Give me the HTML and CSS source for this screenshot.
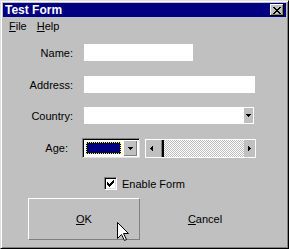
FILE: index.html
```html
<!DOCTYPE html>
<html lang="en">
<head>
	<meta charset="UTF-8">
	<title>Test Form</title>
	<link rel="stylesheet" href="styles.css">
</head>
<body>
	<div class="window">
		<div class="titlebar">
			<span class="title">Test Form</span>
			<button class="close" type="button" aria-label="Close">
				<svg width="8" height="7" viewBox="0 0 8 7" shape-rendering="crispEdges"><path d="M0 0h2v1h1v1h2v-1h1v-1h2v1h-1v1h-1v1h-1v1h1v1h1v1h1v1h-2v-1h-1v-1h-2v1h-1v1h-2v-1h1v-1h1v-1h1v-1h-1v-1h-1v-1h-1z" fill="#000"/></svg>
			</button>
		</div>

		<div class="menubar">
			<span class="menu-item"><u>F</u>ile</span>
			<span class="menu-item"><u>H</u>elp</span>
		</div>

		<div class="form">
			<div class="field">
				<label>Name:</label>
				<div class="edit edit-name"></div>
			</div>
			<div class="field field-address">
				<label>Address:</label>
				<div class="edit edit-address"></div>
			</div>
			<div class="field">
				<label>Country:</label>
				<div class="edit edit-country">
					<span class="drop-flat">
						<svg width="5" height="3" viewBox="0 0 5 3" shape-rendering="crispEdges"><path d="M0 0h5v1h-1v1h-1v1h-1v-1h-1v-1h-1z" fill="#000"/></svg>
					</span>
				</div>
			</div>
			<div class="field field-age">
				<label>Age:</label>
				<div class="age-controls">
					<div class="combo">
						<span class="combo-value"></span>
						<span class="drop">
							<svg width="5" height="3" viewBox="0 0 5 3" shape-rendering="crispEdges"><path d="M0 0h5v1h-1v1h-1v1h-1v-1h-1v-1h-1z" fill="#000"/></svg>
						</span>
					</div>
					<div class="scrollbar">
						<span class="scroll-btn">
							<svg width="3" height="5" viewBox="0 0 3 5" shape-rendering="crispEdges"><path d="M2 0h1v5h-1v-1h-1v-1h-1v-1h1v-1h1z" fill="#000"/></svg>
						</span>
						<span class="scroll-thumb"></span>
						<span class="scroll-track"></span>
						<span class="scroll-btn">
							<svg width="3" height="5" viewBox="0 0 3 5" shape-rendering="crispEdges"><path d="M0 0h1v1h1v1h1v1h-1v1h-1v1h-1z" fill="#000"/></svg>
						</span>
					</div>
				</div>
			</div>
		</div>

		<div class="check-row">
			<span class="checkbox">
				<svg width="7" height="7" viewBox="0 0 7 7" shape-rendering="crispEdges"><path d="M6 0h1v3h-1v1h-1v1h-1v1h-1v1h-1v-1h-1v-1h-1v-3h1v1h1v1h1v-1h1v-1h1v-1h1z" fill="#000"/></svg>
			</span>
			<span>Enable Form</span>
		</div>

		<div class="actions">
			<button class="btn" type="button"><u>O</u>K</button>
			<button class="btn btn-flat" type="button"><u>C</u>ancel</button>
		</div>

		<svg class="cursor" width="12" height="19" viewBox="0 0 12 19"><path d="M0.5 0.5V16.5L4.5 12.5L7.5 18.5L9.5 17.5L6.5 11.5H11.5Z" fill="#fff" stroke="#000"/></svg>
	</div>
</body>
</html>
```

FILE: styles.css
```css
* {
	box-sizing: border-box;
}

body {
	margin: 0;
	font-family: "Liberation Sans", Arial, sans-serif;
	font-size: 11px;
	color: #000;
}

button {
	font: inherit;
	color: inherit;
	padding: 0;
	margin: 0;
}

u {
	text-underline-offset: 1px;
}

.window {
	position: relative;
	width: 289px;
	height: 249px;
	display: flex;
	flex-direction: column;
	padding: 2px;
	background: #c0c0c0;
	border: 1px solid;
	border-color: #dfdfdf #000 #000 #dfdfdf;
	box-shadow: inset 1px 1px #fff, inset -1px -1px #808080;
}

/* title bar */
.titlebar {
	height: 14px;
	display: flex;
	align-items: center;
	justify-content: space-between;
	padding: 0 2px;
	background: #000080;
	color: #fff;
	font-size: 12px;
	font-weight: bold;
	line-height: 14px;
}

.close {
	width: 14px;
	height: 12px;
	display: grid;
	place-items: center;
	border: 0;
	background: #c0c0c0;
	box-shadow: inset -1px -1px #000, inset 1px 1px #fff, inset -2px -2px #808080;
}

.close svg {
	display: block;
}

/* menu */
.menubar {
	display: flex;
	height: 18px;
	line-height: 18px;
	padding-left: 1px;
}

.menu-item {
	padding: 0 5px;
}

/* form rows */
.form {
	display: flex;
	flex-direction: column;
	padding: 9px 0 0 3px;
}

.field {
	display: grid;
	grid-template-columns: 67px auto;
	column-gap: 11px;
	align-items: center;
	justify-items: start;
	height: 17px;
	margin-top: 14px;
}

.field:first-child {
	margin-top: 0;
}

.field-address {
	margin-top: 15px;
}

.field label {
	justify-self: end;
}

.edit {
	height: 17px;
	background: #fff;
}

.edit-name {
	width: 109px;
}

.edit-address {
	width: 171px;
}

.edit-country {
	width: 170px;
	display: flex;
	justify-content: flex-end;
	padding: 1px 1px 1px 0;
}

.drop-flat {
	width: 9px;
	display: grid;
	place-items: center;
	background: #c0c0c0;
}

.drop-flat svg {
	display: block;
}

/* age row */
.field-age {
	height: 20px;
}

.field-age label {
	padding-right: 5px;
}

.age-controls {
	display: flex;
	align-items: flex-start;
	gap: 5px;
	margin-left: -2px;
}

.combo {
	width: 58px;
	height: 20px;
	display: flex;
	padding: 2px;
	background: #fff;
	border: 1px solid;
	border-color: #808080 #dfdfdf #dfdfdf #808080;
	box-shadow: inset 1px 1px #000;
}

.combo-value {
	width: 36px;
	height: 12px;
	margin: 1px 2px 0 1px;
	border: 1px dotted #ff0;
	background: linear-gradient(#000080, #000080) padding-box, #000;
}

.drop {
	width: 14px;
	display: grid;
	place-items: center;
	margin: -1px 0 -1px 0;
	background: #c0c0c0;
	box-shadow: inset 1px 1px #fff, inset -1px -1px #808080;
}

.drop svg {
	display: block;
}

.scrollbar {
	width: 111px;
	height: 19px;
	margin-top: 1px;
	display: flex;
	border: 1px solid #fff;
}

.scroll-btn {
	width: 11px;
	display: grid;
	place-items: center;
	background: #c0c0c0;
}

.scroll-btn svg {
	display: block;
}

.scroll-thumb {
	width: 7px;
	background: #c0c0c0;
	box-shadow: inset -2px 0 #000, inset -3px 0 #808080;
}

.scroll-track {
	flex: 1;
	background-image: repeating-conic-gradient(#fff 0 25%, #c0c0c0 0 50%);
	background-size: 2px 2px;
}

/* checkbox */
.check-row {
	display: flex;
	align-items: center;
	justify-content: center;
	gap: 5px;
	height: 13px;
	margin-top: 19px;
}

.checkbox {
	width: 13px;
	height: 13px;
	display: grid;
	place-items: center;
	background: #fff;
	border: 1px solid;
	border-color: #808080 #fff #fff #808080;
	box-shadow: inset 1px 1px #000, inset -1px -1px #dfdfdf;
}

.checkbox svg {
	display: block;
}

/* buttons */
.actions {
	display: flex;
	justify-content: center;
	gap: 9px;
	margin-top: 8px;
}

.btn {
	width: 112px;
	height: 42px;
	background: transparent;
	border: 1px solid;
	border-color: #fff #808080 #808080 #fff;
}

.btn-flat {
	border-color: transparent;
}

.cursor {
	position: absolute;
	left: 116px;
	top: 221px;
}
```
